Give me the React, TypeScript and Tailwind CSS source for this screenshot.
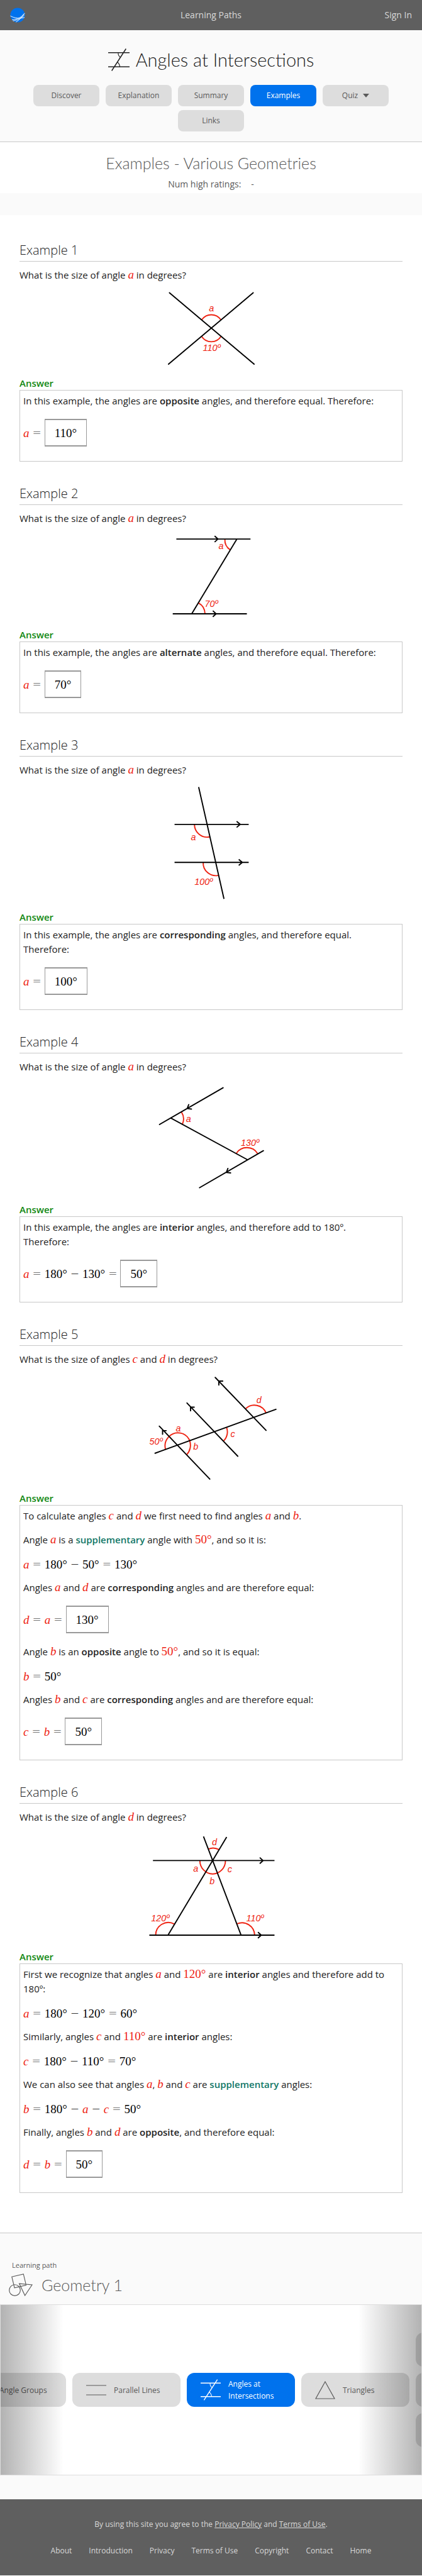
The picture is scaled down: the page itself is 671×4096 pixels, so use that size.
import React from "react";

const Var = ({ children }: { children: React.ReactNode }) => (
  <i className="font-['Liberation_Serif',serif] text-[19px] leading-none text-[#ee2211]">{children}</i>
);

const Deg = ({ n, red = false }: { n: number; red?: boolean }) => (
  <span className={red ? "font-['Liberation_Serif',serif] text-[19px] leading-none text-[#ee2211]" : "text-black"}>
    {n}°
  </span>
);

const Op = ({ children }: { children: React.ReactNode }) => (
  <span className="font-['DejaVu_Sans_Light','DejaVu_Sans',sans-serif] text-[17px] leading-none font-extralight">{children}</span>
);

const Formula = ({ children, result }: { children: React.ReactNode; result?: number }) => (
  <p
    className={
      result === undefined
        ? "flex h-[23px] items-center gap-[5px] pt-0.5 font-['Liberation_Serif',serif] text-[19px] text-black"
        : "mt-0.5 mb-[3px] flex h-11 items-center gap-[5px] font-['Liberation_Serif',serif] text-[19px] text-black"
    }
  >
    {children}
    {result !== undefined && (
      <span className="flex h-11 items-center border-x border-y-2 border-[#999] px-[15px]">
        <Deg n={result} />
      </span>
    )}
  </p>
);

type FigureProps = { viewBox: string; height: string; title: string; children: React.ReactNode };

const Figure = ({ viewBox, height, title, children }: FigureProps) => (
  <svg
    viewBox={viewBox}
    role="img"
    aria-label={title}
    className={`mx-auto block w-[230px] ${height} fill-none stroke-black stroke-2 font-['Liberation_Sans',sans-serif] text-[15px] italic`}
    strokeLinecap="round"
  >
    {children}
  </svg>
);

const Arc = ({ d }: { d: string }) => <path d={d} className="stroke-[#ee2211]" strokeLinecap="butt" />;

const Label = ({ x, y, children }: { x: number; y: number; children: React.ReactNode }) => (
  <text x={x} y={y} className="fill-[#ee2211] stroke-none">
    {children}
  </text>
);

const Example = ({
  n,
  question,
  figure,
  children,
}: {
  n: number;
  question: React.ReactNode;
  figure: React.ReactNode;
  children: React.ReactNode;
}) => (
  <section className="pt-[37px]">
    <h3 className="h-8 border-b border-[#c8c8c8] font-['Open_Sans',sans-serif] text-xl leading-[28px] font-light text-[#222]">
      Example {n}
    </h3>
    <p className="mt-2.5 leading-[23px]">{question}</p>
    {figure}
    <h4 className="h-[22px] leading-[22px] font-semibold text-[#118811]">Answer</h4>
    <div className="flex flex-col gap-[15px] border border-[#c8c8c8] px-[5px] pt-[5px] pb-5 leading-[23px]">{children}</div>
  </section>
);

const Supplementary = () => (
  <a href="#supplementary" className="font-semibold text-[#117766]">
    supplementary
  </a>
);

const AnglesIcon = ({ className }: { className: string }) => (
  <svg viewBox="0 0 36 38" className={`${className} fill-none stroke-current`} aria-hidden="true">
    <path d="M0 7H36M0 31H36M6 37.500 30 0.500" strokeWidth="1.600" />
    <path d="M17 7C16.500 10 18 13 20.500 15M19.500 31C19.500 28 18 25 15.500 23" strokeWidth="1.200" />
  </svg>
);

const tabs = ["Discover", "Explanation", "Summary", "Examples", "Quiz", "Links"];
const footerLinks = ["About", "Introduction", "Privacy", "Terms of Use", "Copyright", "Contact", "Home"];

const cardBase = "flex h-[54px] w-[172px] shrink-0 items-center rounded-xl gap-3 pl-[22px] text-xs leading-[19px]";

export default function App() {
  return (
    <div className="bg-white font-['Open_Sans',sans-serif] text-[15px] text-[#222]">
      <header className="grid h-12 grid-cols-3 items-center bg-[#5f5f5f] px-4 text-sm text-[#d9d9d9]">
        <a href="#home" aria-label="Home">
          <svg viewBox="0 0 26 26" className="h-6 w-6" aria-hidden="true">
            <circle cx="13" cy="13" r="12.500" fill="#0072ed" />
            <path
              d="M0.500 14.500C8 18.500 17 19.500 25 17M3.500 21C12 20.500 20 17 25.500 9.500M5 23C13 21.500 19 19 24.500 13M10 25C16 21.500 20 17.500 23.500 11"
              fill="none"
              stroke="#fff"
              strokeWidth="1"
            />
          </svg>
        </a>
        <a href="#paths" className="text-center">Learning Paths</a>
        <a href="#signin" className="text-right">Sign In</a>
      </header>

      <div className="flex h-[178px] flex-col items-center border-b border-[#c8c8c8] bg-[#fafafa] pt-6">
        <h1 className="flex h-[46px] items-center gap-2.5 font-['Lato',sans-serif] text-[29px] font-light text-[#222]">
          <AnglesIcon className="h-9 w-[34px]" />
          Angles at Intersections
        </h1>
        <nav className="mt-[17px] flex flex-wrap justify-center gap-x-2.5 gap-y-1.5 px-12">
          {tabs.map((t) => (
            <button
              key={t}
              type="button"
              className={
                t === "Examples"
                  ? "h-[34px] w-[105px] rounded-lg bg-[#0072ed] text-xs text-white"
                  : "flex h-[34px] w-[105px] items-center justify-center rounded-lg bg-[#ddd] text-xs text-[#5a5a5a]"
              }
            >
              {t}
              {t === "Quiz" && (
                <svg viewBox="0 0 10 6" className="ml-2 h-1.5 w-2.5 fill-current" aria-hidden="true">
                  <path d="M0 0H10L5 6Z" />
                </svg>
              )}
            </button>
          ))}
        </nav>
      </div>

      <div className="flex h-[81px] flex-col items-center pt-[15px]">
        <h2 className="font-['Lato',sans-serif] text-[25px] leading-9 font-light text-[#5a5a5a]">Examples - Various Geometries</h2>
        <p className="mt-1.5 flex gap-4 text-sm leading-5 text-[#5a5a5a]">
          <span>Num high ratings:</span>
          <span>-</span>
        </p>
      </div>
      <div className="h-[35px] bg-[#fafafa]" />

      <main className="px-[31px] pt-[5px] pb-[63px]">
        <Example
          n={1}
          question={<>What is the size of angle <Var>a</Var> in degrees?</>}
          figure={
            <Figure viewBox="230 89 240 155" height="h-[149px]" title="Two crossing lines">
              <Arc d="M334.500 150.500A19 19 0 0 1 365.500 150.500M334 178.500A19 19 0 0 0 366 178.500" />
              <path d="M280.500 106 421 224.500M419.500 106 279 224.500" />
              <Label x={346} y={137}>a</Label>
              <Label x={336} y={202}>110º</Label>
            </Figure>
          }
        >
          <p>In this example, the angles are <strong className="font-semibold">opposite</strong> angles, and therefore equal. Therefore:</p>
          <Formula result={110}><Var>a</Var><Op>=</Op></Formula>
        </Example>

        <Example
          n={2}
          question={<>What is the size of angle <Var>a</Var> in degrees?</>}
          figure={
            <Figure viewBox="230 83 240 169" height="h-[162px]" title="Alternate angles between parallel lines">
              <Arc d="M372.500 105A20 20 0 0 0 381.500 123M328.500 211A21 21 0 0 1 339.500 229" />
              <path d="M292 105H415M286 229H409M392.500 105 317.500 229M355.500 100 361 105 355.500 110M352.500 224 358 229 352.500 234" strokeLinecap="butt" />
              <Label x={362} y={122}>a</Label>
              <Label x={339} y={218}>70º</Label>
            </Figure>
          }
        >
          <p>In this example, the angles are <strong className="font-semibold">alternate</strong> angles, and therefore equal. Therefore:</p>
          <Formula result={70}><Var>a</Var><Op>=</Op></Formula>
        </Example>

        <Example
          n={3}
          question={<>What is the size of angle <Var>a</Var> in degrees?</>}
          figure={
            <Figure viewBox="230 91 240 220" height="h-[211px]" title="Corresponding angles on parallel lines">
              <Arc d="M322 169A21 21 0 0 0 348 189.500M336.500 232A21 21 0 0 0 362 253.500" />
              <path d="M289 169H412M289 232H412M329 107 371 292.500M392 164 398 169 392 174M395.500 227 401.500 232 395.500 237" strokeLinecap="butt" />
              <Label x={316} y={195}>a</Label>
              <Label x={322} y={269}>100º</Label>
            </Figure>
          }
        >
          <p>In this example, the angles are <strong className="font-semibold">corresponding</strong> angles, and therefore equal.<br />Therefore:</p>
          <Formula result={100}><Var>a</Var><Op>=</Op></Formula>
        </Example>

        <Example
          n={4}
          question={<>What is the size of angle <Var>a</Var> in degrees?</>}
          figure={
            <Figure viewBox="230 83 240 213" height="h-[204px]" title="Interior angles between parallel lines">
              <Arc d="M300.500 146A21 21 0 0 1 302 166M391.500 214.500A21 21 0 0 1 427 215" />
              <path d="M264 166.500 369.500 105.500M283 156 410 225M330.500 271.500 436.500 210M312.500 133.500 310 140 317 141M377.500 239.500 375 246 382 247" />
              <Label x={308} y={162}>a</Label>
              <Label x={399} y={202}>130º</Label>
            </Figure>
          }
        >
          <p>In this example, the angles are <strong className="font-semibold">interior</strong> angles, and therefore add to 180º.<br />Therefore:</p>
          <Formula result={50}><Var>a</Var><Op>=</Op><Deg n={180} /><Op>−</Op><Deg n={130} /><Op>=</Op></Formula>
        </Example>

        <Example
          n={5}
          question={<>What is the size of angles <Var>c</Var> and <Var>d</Var> in degrees?</>}
          figure={
            <Figure viewBox="230 87 240 207" height="h-[198px]" title="Three parallel lines crossed by one line">
              <Arc d="M407 157A21 21 0 0 1 441 164M375.500 188.500A21 21 0 0 1 370.500 210.500M279.500 203.500A21 21 0 0 1 314 210A23 23 0 0 1 309 233.500M279.500 203.500A22 22 0 0 0 274 225" />
              <path d="M256.500 231 457.500 158M356.500 105 441 193M309.500 147.500 394 236M263.500 186 347.500 274M362.500 117.500V111H369M315.500 160.500V154.500H321.500M269 199.500V193.500H275" />
              <Label x={291} y={195}>a</Label>
              <Label x={320} y={225}>b</Label>
              <Label x={382} y={204}>c</Label>
              <Label x={425} y={148}>d</Label>
              <Label x={247} y={217}>50º</Label>
            </Figure>
          }
        >
          <p>To calculate angles <Var>c</Var> and <Var>d</Var> we first need to find angles <Var>a</Var> and <Var>b</Var>.</p>
          <p>Angle <Var>a</Var> is a <Supplementary /> angle with <Deg n={50} red />, and so it is:</p>
          <Formula><Var>a</Var><Op>=</Op><Deg n={180} /><Op>−</Op><Deg n={50} /><Op>=</Op><Deg n={130} /></Formula>
          <p>Angles <Var>a</Var> and <Var>d</Var> are <strong className="font-semibold">corresponding</strong> angles and are therefore equal:</p>
          <Formula result={130}><Var>d</Var><Op>=</Op><Var>a</Var><Op>=</Op></Formula>
          <p>Angle <Var>b</Var> is an <strong className="font-semibold">opposite</strong> angle to <Deg n={50} red />, and so it is equal:</p>
          <Formula><Var>b</Var><Op>=</Op><Deg n={50} /></Formula>
          <p>Angles <Var>b</Var> and <Var>c</Var> are <strong className="font-semibold">corresponding</strong> angles and are therefore equal:</p>
          <Formula result={50}><Var>c</Var><Op>=</Op><Var>b</Var><Op>=</Op></Formula>
        </Example>

        <Example
          n={6}
          question={<>What is the size of angle <Var>d</Var> in degrees?</>}
          figure={
            <Figure viewBox="230 79 240 208" height="h-[199px]" title="Two lines crossing on a parallel line">
              <Arc d="M345 120A20 20 0 0 1 363 121M331 139A21 22 0 0 0 373.500 139M257.500 263A21 21 0 0 1 288.500 244.500M393 244A21 21 0 0 1 422 263" />
              <path d="M253 139H455M247 263H455M375.500 100 278 263M337 99 399.500 263M430.500 134 436 139 430.500 144M427.500 258 433 263 427.500 268" strokeLinecap="butt" />
              <Label x={320} y={157}>a</Label>
              <Label x={347} y={178}>b</Label>
              <Label x={377} y={158}>c</Label>
              <Label x={351} y={113}>d</Label>
              <Label x={250} y={240}>120º</Label>
              <Label x={408} y={240}>110º</Label>
            </Figure>
          }
        >
          <p>First we recognize that angles <Var>a</Var> and <Deg n={120} red /> are <strong className="font-semibold">interior</strong> angles and therefore add to<br />180º:</p>
          <Formula><Var>a</Var><Op>=</Op><Deg n={180} /><Op>−</Op><Deg n={120} /><Op>=</Op><Deg n={60} /></Formula>
          <p>Similarly, angles <Var>c</Var> and <Deg n={110} red /> are <strong className="font-semibold">interior</strong> angles:</p>
          <Formula><Var>c</Var><Op>=</Op><Deg n={180} /><Op>−</Op><Deg n={110} /><Op>=</Op><Deg n={70} /></Formula>
          <p>We can also see that angles <Var>a</Var>, <Var>b</Var> and <Var>c</Var> are <Supplementary /> angles:</p>
          <Formula><Var>b</Var><Op>=</Op><Deg n={180} /><Op>−</Op><Var>a</Var><Op>−</Op><Var>c</Var><Op>=</Op><Deg n={50} /></Formula>
          <p>Finally, angles <Var>b</Var> and <Var>d</Var> are <strong className="font-semibold">opposite</strong>, and therefore equal:</p>
          <Formula result={50}><Var>d</Var><Op>=</Op><Var>b</Var><Op>=</Op></Formula>
        </Example>
      </main>

      <section className="border-t border-[#c8c8c8] bg-[#fafafa] pt-[43px] pb-[38px] text-[#5a5a5a]">
        <div className="h-[70px]">
          <p className="pl-[19px] text-[11px] leading-4">Learning path</p>
          <h2 className="flex items-center gap-3.5 pt-[5px] pl-3.5 font-['Lato',sans-serif] text-[25px] leading-9 font-light">
            <svg viewBox="0 0 40 38" className="h-9 w-[38px] fill-none stroke-current stroke-[1.2]" aria-hidden="true">
              <path d="M5 5.500 24.500 1 29 19.500 9.500 24ZM17.500 17 39 19 27 37Z" />
              <circle cx="10" cy="28" r="9.300" />
            </svg>
            Geometry 1
          </h2>
        </div>
        <div className="relative h-[272px] overflow-hidden border border-[#ddd] bg-white">
          <div className="-ml-[68px] flex h-full items-center gap-2.5">
            <a href="#angle-groups" className={`${cardBase} bg-[#ddd]`}>
              <svg viewBox="0 0 32 32" className="h-8 w-8 fill-none stroke-current" aria-hidden="true">
                <path d="M0 30H32M0 30 26 4" />
              </svg>
              Angle Groups
            </a>
            <a href="#parallel-lines" className={`${cardBase} bg-[#ddd]`}>
              <svg viewBox="0 0 32 32" className="h-8 w-8 fill-none stroke-current stroke-[1.2]" aria-hidden="true">
                <path d="M0 9H32M0 24H32" />
              </svg>
              Parallel Lines
            </a>
            <a href="#angles-at-intersections" className={`${cardBase} bg-[#0072ed] text-white`}>
              <AnglesIcon className="h-[34px] w-8" />
              <span>Angles at<br />Intersections</span>
            </a>
            <a href="#triangles" className={`${cardBase} bg-[#ddd]`}>
              <svg viewBox="0 0 32 32" className="h-8 w-8 fill-none stroke-current stroke-[1.2]" aria-hidden="true">
                <path d="M16 3 31 30H1Z" />
              </svg>
              Triangles
            </a>
            <div className="flex flex-col gap-2.5">
              <span className={`${cardBase} bg-[#ddd]`} />
              <span className={`${cardBase} bg-[#ddd]`} />
              <span className={`${cardBase} bg-[#ddd]`} />
            </div>
          </div>
          <div className="pointer-events-none absolute inset-y-0 left-0 w-[15%] bg-linear-to-r from-black/30 to-transparent" />
          <div className="pointer-events-none absolute inset-y-0 right-0 w-[15%] bg-linear-to-l from-black/30 to-transparent" />
        </div>
      </section>

      <footer className="h-[121px] bg-[#5f5f5f] pt-[30px] text-center text-xs leading-5 text-[#d9d9d9]">
        <p>
          By using this site you agree to the <a href="#privacy" className="underline">Privacy Policy</a> and{" "}
          <a href="#terms" className="underline">Terms of Use</a>.
        </p>
        <nav className="mt-[22px] flex justify-center gap-[27px]">
          {footerLinks.map((l) => (
            <a key={l} href={`#${l}`}>{l}</a>
          ))}
        </nav>
      </footer>
    </div>
  );
}
